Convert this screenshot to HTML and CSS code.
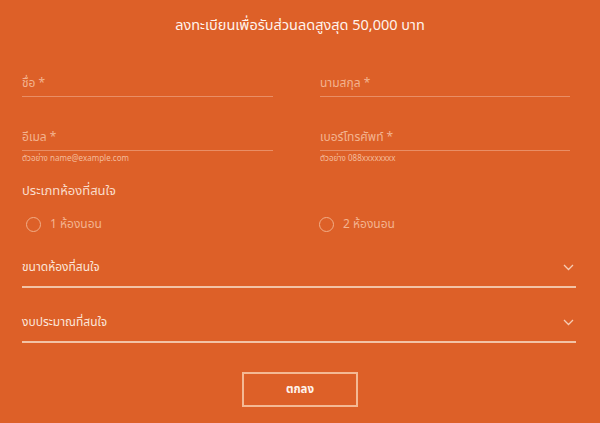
FILE: index.html
```html
<!DOCTYPE html>
<html lang="th">
<head>
<meta charset="utf-8">
<link rel="stylesheet" href="styles.css">
</head>
<body>
<div class="page">
  <h1 class="title">ลงทะเบียนเพื่อรับส่วนลดสูงสุด 50,000 บาท</h1>
  <form class="form">
    <div class="grid">
      <div class="field"><span class="ph">ชื่อ *</span></div>
      <div class="field"><span class="ph">นามสกุล *</span></div>
      <div class="field field-2"><span class="ph">อีเมล *</span></div>
      <div class="field field-2"><span class="ph">เบอร์โทรศัพท์ *</span></div>
      <div class="hint">ตัวอย่าง name@example.com</div>
      <div class="hint">ตัวอย่าง 088xxxxxxxx</div>
    </div>
    <div class="section">ประเภทห้องที่สนใจ</div>
    <div class="radios">
      <label class="radio"><span class="circle"></span>1 ห้องนอน</label>
      <label class="radio"><span class="circle"></span>2 ห้องนอน</label>
    </div>
    <div class="select first">
      <span>ขนาดห้องที่สนใจ</span>
      <svg class="chev" width="11" height="7" viewBox="0 0 11 7"><path d="M1 1 L5.5 5.5 L10 1" fill="none" stroke="#f6cdb5" stroke-width="1.3"/></svg>
    </div>
    <div class="select second">
      <span>งบประมาณที่สนใจ</span>
      <svg class="chev" width="11" height="7" viewBox="0 0 11 7"><path d="M1 1 L5.5 5.5 L10 1" fill="none" stroke="#f6cdb5" stroke-width="1.3"/></svg>
    </div>
    <div class="actions">
      <button type="button" class="btn">ตกลง</button>
    </div>
  </form>
</div>
</body>
</html>
```
FILE: styles.css
```css
html, body {
  margin: 0;
  padding: 0;
  background: #dd6028;
}
body {
  font-family: "Noto Sans", "Noto Sans Thai", "DejaVu Sans", sans-serif;
  width: 600px;
  height: 423px;
  overflow: hidden;
}
.page {
  padding: 0 24px 0 22px;
}
.title {
  margin: 0;
  height: 48px;
  line-height: 48px;
  font-size: 14.5px;
  font-weight: normal;
  color: #fff3ec;
  text-align: center;
  margin-left: -22px;
  margin-right: -24px;
}
.form {
  margin: 25px 0 0;
}
.grid {
  display: grid;
  grid-template-columns: 251px 250px;
  column-gap: 47px;
}
.field {
  height: 23px;
  border-bottom: 1px solid rgba(255, 230, 215, 0.35);
}
.field-2 {
  margin-top: 30px;
}
.ph {
  display: block;
  line-height: 20px;
  font-size: 12px;
  color: #f3b38f;
}
.hint {
  margin-top: 1px;
  line-height: 12px;
  font-size: 8px;
  color: #f4bc9c;
}
.section {
  margin-top: 16px;
  line-height: 20px;
  font-size: 13px;
  color: #f9dccb;
}
.radios {
  display: grid;
  grid-template-columns: 293px auto;
  padding-left: 4px;
  margin-top: 14px;
}
.radio {
  display: flex;
  align-items: center;
  height: 20px;
  font-size: 12px;
  color: #f3b38f;
}
.circle {
  box-sizing: border-box;
  width: 15px;
  height: 15px;
  border: 1px solid #f1ae88;
  border-radius: 50%;
  margin-right: 9px;
}
.select {
  display: flex;
  justify-content: space-between;
  align-items: center;
  height: 20px;
  padding-bottom: 9px;
  border-bottom: 2px solid #f2c3a6;
  font-size: 12px;
  color: #fbe6da;
}
.first {
  margin-top: 23px;
}
.second {
  margin-top: 24px;
}
.chev {
  margin-right: 2px;
}
.actions {
  display: flex;
  justify-content: center;
  margin-top: 29px;
  margin-left: -22px;
  margin-right: -24px;
}
.btn {
  width: 116px;
  height: 35px;
  background: transparent;
  border: 2px solid #f4b994;
  color: #fff3ec;
  font-family: inherit;
  font-size: 11.5px;
  font-weight: bold;
  cursor: pointer;
}
```
